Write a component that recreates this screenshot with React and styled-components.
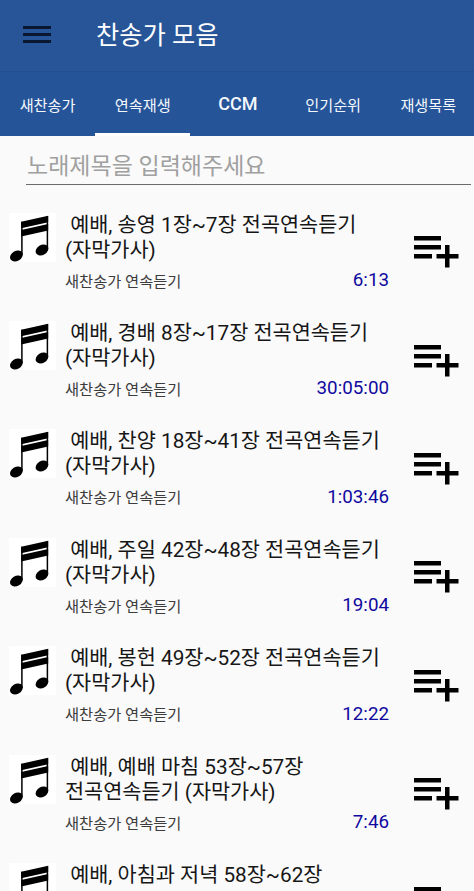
import React from 'react';
import styled, { createGlobalStyle } from 'styled-components';

const GlobalStyle = createGlobalStyle`
  * {
    box-sizing: border-box;
  }
  body {
    margin: 0;
    background: #fafafa;
    font-family: Roboto, 'Noto Sans CJK KR', sans-serif;
  }
`;

const Screen = styled.div`
  width: 474px;
  height: 891px;
  overflow: hidden;
  background: #fafafa;
`;

const Toolbar = styled.header`
  display: flex;
  align-items: center;
  height: 72px;
  padding: 1px 0 0 23px;
  background: #275598;
  border-bottom: 1px solid #234f91;
`;

const MenuButton = styled.button`
  display: flex;
  flex-direction: column;
  gap: 4px;
  width: 28px;
  margin-bottom: 4px;
  padding: 0;
  border: 0;
  background: none;
`;

const MenuBar = styled.span`
  height: 3px;
  background: #0a1730;
`;

const Title = styled.h1`
  margin: 0 0 0 45px;
  color: #fff;
  font-size: 25.3px;
  font-weight: 400;
  line-height: 36px;
`;

const Tabs = styled.nav`
  display: grid;
  grid-template-columns: repeat(5, 95.2px);
  height: 63.5px;
  background: #265499;
`;

const Tab = styled.a`
  display: flex;
  align-items: center;
  justify-content: center;
  padding-top: 3px;
  border-bottom: 3px solid ${props => (props.$active ? '#fff' : 'transparent')};
  color: #f4f8fd;
  font-size: ${props => (props.$latin ? '18px' : '15.2px')};
  font-weight: ${props => (props.$latin ? 500 : 400)};
`;

const SearchInput = styled.input`
  display: block;
  width: 445px;
  height: 49.5px;
  margin-left: 26px;
  padding: 13px 0 0 1px;
  border: 0;
  border-bottom: 1px solid #6b6b6b;
  outline: 0;
  background: none;
  font-family: inherit;
  font-size: 23px;
  &::placeholder {
    color: #a0a0a0;
    opacity: 1;
  }
`;

const List = styled.ul`
  margin: 27.6px 0 0;
  padding: 0;
  list-style: none;
`;

const Row = styled.li`
  display: flex;
  align-items: flex-start;
  height: 108.4px;
  padding-left: 9px;
`;

const Thumb = styled.div`
  width: 47px;
  height: 49px;
  background: #fff;
  svg {
    display: block;
  }
`;

const Details = styled.div`
  width: 333px;
  margin-left: 9px;
`;

const SongTitle = styled.div`
  color: #161616;
  font-size: 20.77px;
  line-height: 25px;
  white-space: pre;
`;

const Meta = styled.div`
  display: flex;
  align-items: center;
  justify-content: space-between;
  height: 24px;
  margin-top: 5px;
  padding-right: 9px;
`;

const Category = styled.span`
  color: #3c3c3c;
  font-size: 15.3px;
`;

const Duration = styled.span`
  padding-top: 1px;
  color: #1009a0;
  font-size: 18.8px;
`;

const AddButton = styled.button`
  margin: 23.6px 0 0 16px;
  padding: 0;
  border: 0;
  background: none;
  svg {
    display: block;
  }
`;

const tabs = ['새찬송가', '연속재생', 'CCM', '인기순위', '재생목록'];

const songs = [
  { title: ' 예배, 송영 1장~7장 전곡연속듣기\n(자막가사)', time: '6:13' },
  { title: ' 예배, 경배 8장~17장 전곡연속듣기\n(자막가사)', time: '30:05:00' },
  { title: ' 예배, 찬양 18장~41장 전곡연속듣기\n(자막가사)', time: '1:03:46' },
  { title: ' 예배, 주일 42장~48장 전곡연속듣기\n(자막가사)', time: '19:04' },
  { title: ' 예배, 봉헌 49장~52장 전곡연속듣기\n(자막가사)', time: '12:22' },
  { title: ' 예배, 예배 마침 53장~57장\n전곡연속듣기 (자막가사)', time: '7:46' },
  { title: ' 예배, 아침과 저녁 58장~62장' },
];

const NoteIcon = () => (
  <svg width="47" height="49" viewBox="0 0 47 49">
    <path d="M12.2 8.8 39.2 2.8V9.2L12.2 15.2Z" />
    <path d="M12.2 16.9 39.2 11V17.4L12.2 23.4Z" />
    <path d="M12.9 8.8V42M38.4 3V36" stroke="#000" strokeWidth="1.5" />
    <ellipse cx="7.4" cy="43" rx="6.8" ry="5" transform="rotate(-32 7.4 43)" />
    <ellipse cx="33" cy="37" rx="6.8" ry="5" transform="rotate(-32 33 37)" />
  </svg>
);

const PlaylistAddIcon = () => (
  <svg width="46" height="32" viewBox="0 0 46 32">
    <path d="M0 0H27V4.5H0ZM0 9H27V13.5H0ZM0 18H18V22.5H0Z" />
    <path d="M31 9H35.5V18H44.5V22.5H35.5V31.5H31V22.5H22.5V18H31Z" />
  </svg>
);

const Song = ({ title, time }) => (
  <Row>
    <Thumb>
      <NoteIcon />
    </Thumb>
    <Details>
      <SongTitle>{title}</SongTitle>
      {time && (
        <Meta>
          <Category>새찬송가 연속듣기</Category>
          <Duration>{time}</Duration>
        </Meta>
      )}
    </Details>
    <AddButton aria-label="재생목록">
      <PlaylistAddIcon />
    </AddButton>
  </Row>
);

const App = () => (
  <>
    <GlobalStyle />
    <Screen>
      <Toolbar>
        <MenuButton>
          <MenuBar />
          <MenuBar />
          <MenuBar />
        </MenuButton>
        <Title>찬송가 모음</Title>
      </Toolbar>
      <Tabs>
        {tabs.map(tab => (
          <Tab key={tab} $active={tab === '연속재생'} $latin={tab === 'CCM'}>
            {tab}
          </Tab>
        ))}
      </Tabs>
      <SearchInput placeholder="노래제목을 입력해주세요" />
      <List>
        {songs.map(song => (
          <Song key={song.title} {...song} />
        ))}
      </List>
    </Screen>
  </>
);

export default App;
